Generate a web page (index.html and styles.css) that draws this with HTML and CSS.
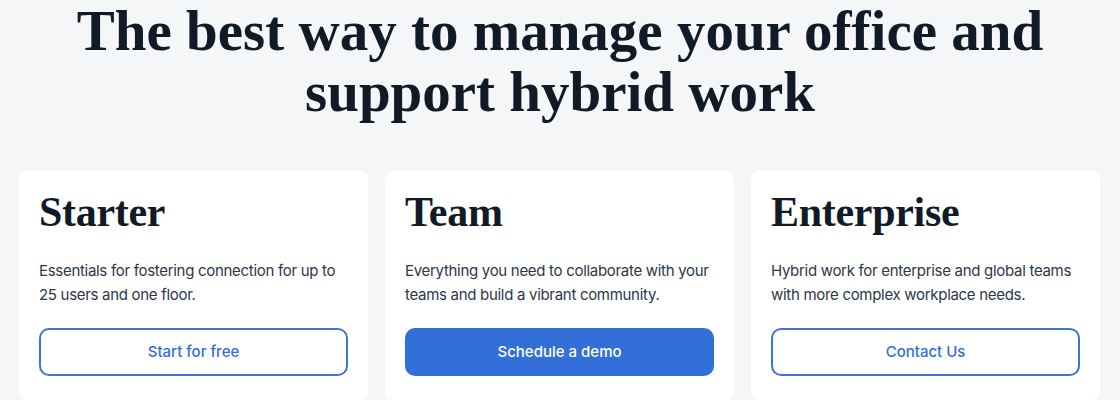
FILE: index.html
```html
<!DOCTYPE html>
<html lang="en">
<head>
  <meta charset="UTF-8">
  <meta name="viewport" content="width=device-width, initial-scale=1.0">
  <title>Pricing</title>
  <link rel="stylesheet" href="styles.css">
</head>
<body>

  <h1 class="hero-title">The best way to manage your office and<br>support hybrid work</h1>

  <div class="plans">
    <div class="plan">
      <h2 class="plan-name">Starter</h2>
      <p class="plan-desc">Essentials for fostering connection for up to 25 users and one floor.</p>
      <a class="btn btn-outline" href="#">Start for free</a>
    </div>
    <div class="plan">
      <h2 class="plan-name">Team</h2>
      <p class="plan-desc">Everything you need to collaborate with your teams and build a vibrant community.</p>
      <a class="btn btn-solid" href="#">Schedule a demo</a>
    </div>
    <div class="plan">
      <h2 class="plan-name">Enterprise</h2>
      <p class="plan-desc">Hybrid work for enterprise and global teams with more complex workplace needs.</p>
      <a class="btn btn-outline" href="#">Contact Us</a>
    </div>
  </div>

</body>
</html>
```

FILE: styles.css
```css
body {
  margin: 0;
  background-color: #f5f6f8;
  color: #111a27;
  font-family: Inter, "Noto Sans", sans-serif;
}

.hero-title {
  margin: 0;
  font-family: "Liberation Serif", serif;
  font-weight: 700;
  font-size: 57px;
  line-height: 61px;
  text-align: center;
}

.plans {
  display: grid;
  grid-template-columns: repeat(3, 1fr);
  gap: 17px;
  padding: 49px 20px 0 19px;
}

.plan {
  background-color: #fff;
  border-radius: 8px;
  padding: 16px 20px 24px;
}

.plan-name {
  margin: 0;
  font-family: "Liberation Serif", serif;
  font-weight: 700;
  font-size: 42px;
  line-height: 50px;
  letter-spacing: -0.3px;
}

.plan-desc {
  margin: 22px 0 21px;
  font-size: 15px;
  line-height: 24px;
  letter-spacing: -0.3px;
  color: #2d3748;
}

.btn {
  display: block;
  box-sizing: border-box;
  height: 48px;
  line-height: 44px;
  border: 2px solid #3a75dc;
  border-radius: 10px;
  text-align: center;
  text-decoration: none;
  font-size: 15px;
  font-weight: 500;
}

.btn-outline {
  color: #2f6fdc;
  background-color: #fff;
}

.btn-solid {
  color: #fff;
  background-color: #326fd8;
  border-color: #326fd8;
}
```
